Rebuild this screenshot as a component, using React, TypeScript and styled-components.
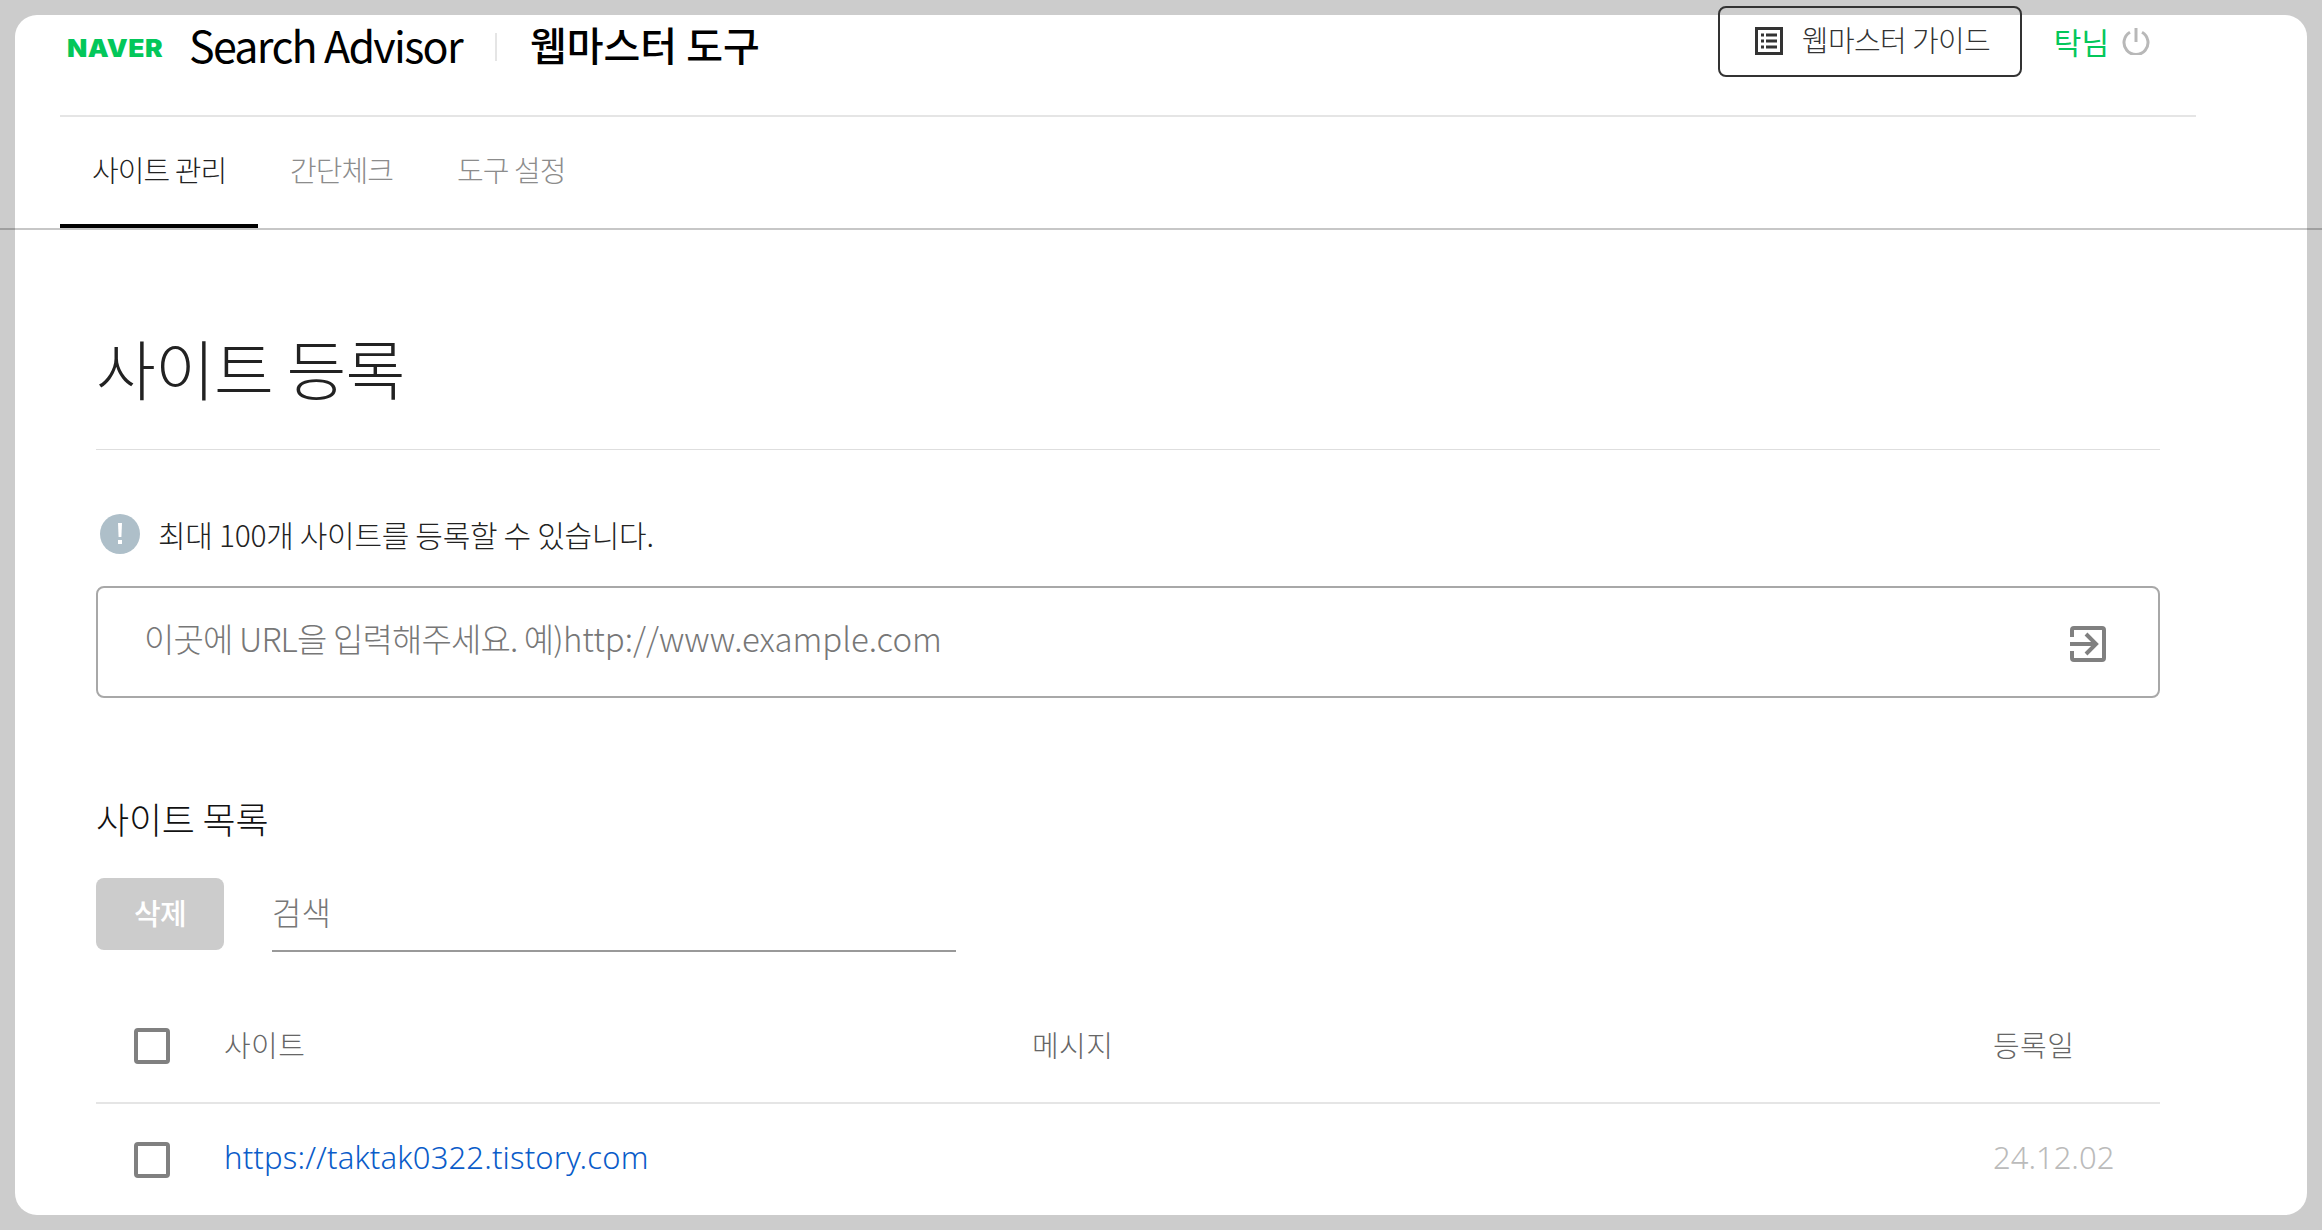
import React from "react";
import styled, { createGlobalStyle } from "styled-components";

const Global = createGlobalStyle`
  html, body { margin: 0; padding: 0; background: #cccccc; }
  body { font-family: "Noto Sans CJK KR", "Noto Sans", sans-serif; font-weight: 300; overflow: hidden; }
  * { box-sizing: border-box; }
`;
const KR = `"Noto Sans CJK KR", "Noto Sans", sans-serif`;

const Page = styled.div`
  position: relative;
  width: 2322px;
  height: 1230px;
  padding: 15px;
  background: #cccccc;
`;
const Card = styled.div`
  width: 2292px;
  height: 1200px;
  background: #fff;
  border-radius: 22px;
`;
const Rule = styled.div`
  position: absolute;
  left: 0;
  right: 0;
  top: 228px;
  height: 2px;
  background: rgba(0, 0, 0, 0.22);
`;
const Nav = styled.header`
  margin: 0 111px 0 45px;
`;
const TopBar = styled.div`
  display: flex;
  align-items: flex-start;
  height: 102px;
  border-bottom: 2px solid #e5e5e5;
`;
const Brand = styled.div`
  display: flex;
  align-items: center;
  height: 58px;
  margin-left: 7px;
  flex: 1;
`;
const Logo = styled.span`
  font-family: "Inter", sans-serif;
  font-weight: 900;
  font-size: 24px;
  line-height: 1;
  letter-spacing: 0.4px;
  color: #03c75a;
  width: 97px;
  margin-top: 10px;
  transform: scaleX(1.1);
  transform-origin: left center;
  white-space: nowrap;
`;
const Product = styled.span`
  font-family: ${KR};
  font-weight: 400;
  font-size: 43px;
  color: #000;
  margin-left: 25px;
  letter-spacing: -1.7px;
  white-space: nowrap;
`;
const Sep = styled.span`
  width: 2px;
  height: 28px;
  background: #e5e5e5;
  margin: 6px 33px 0 33px;
`;
const ToolName = styled.span`
  font-family: ${KR};
  font-weight: 500;
  font-size: 40px;
  color: #000;
  white-space: nowrap;
`;
const GuideButton = styled.a`
  display: flex;
  align-items: center;
  width: 304px;
  height: 71px;
  margin-top: -9px;
  padding: 0 0 6px 35px;
  border: 2px solid #333;
  border-radius: 8px;
  font-size: 29px;
  color: #333;
  gap: 19px;
  white-space: nowrap;
  letter-spacing: -0.6px;
`;
const GuideGlyph = styled.svg`
  margin-top: 4px;
  flex: none;
`;
const User = styled.div`
  display: flex;
  align-items: center;
  height: 52px;
  margin: 0 46px 0 32px;
  gap: 13px;
`;
const UserName = styled.span`
  font-size: 30px;
  font-weight: 400;
  color: #03c75a;
  white-space: nowrap;
`;
const Tabs = styled.nav`
  display: flex;
  height: 111px;
`;
const Tab = styled.a<{ $active?: boolean }>`
  display: flex;
  align-items: center;
  height: 111px;
  padding: 0 32px 3px;
  font-size: 29px;
  letter-spacing: -0.95px;
  white-space: nowrap;
  color: ${(p) => (p.$active ? "#222" : "#8c8c8c")};
  border-bottom: 4px solid ${(p) => (p.$active ? "#000" : "transparent")};
`;
const Main = styled.main`
  margin: 2px 147px 0 81px;
`;
const Title = styled.h1`
  display: flex;
  align-items: center;
  margin: 0;
  height: 220px;
  padding-top: 55px;
  font-size: 65px;
  font-weight: 300;
  color: #222;
  letter-spacing: -0.8px;
  border-bottom: 1px solid #dedede;
`;
const Notice = styled.div`
  display: flex;
  align-items: center;
  gap: 18px;
  height: 136px;
  padding: 32px 0 0 4px;
  font-size: 30px;
  font-weight: 300;
  color: #222;
  letter-spacing: -0.3px;
`;
const InputBox = styled.div`
  display: flex;
  align-items: center;
  justify-content: space-between;
  height: 112px;
  padding: 0 52px 0 46px;
  border: 2px solid #a8a8a8;
  border-radius: 8px;
`;
const Placeholder = styled.span`
  font-size: 33px;
  color: #777;
  letter-spacing: -0.85px;
  padding-bottom: 8px;
  white-space: nowrap;
`;
const PlaceholderUrl = styled.span`
  letter-spacing: 0;
`;
const EnterGlyph = styled.svg`
  margin-top: 3px;
  flex: none;
`;
const SectionTitle = styled.h2`
  margin: 0;
  display: flex;
  align-items: center;
  height: 180px;
  padding-top: 60px;
  font-size: 36px;
  font-weight: 300;
  color: #111;
  letter-spacing: -0.2px;
`;
const Toolbar = styled.div`
  display: flex;
  gap: 48px;
  height: 74px;
`;
const DeleteButton = styled.button`
  width: 128px;
  height: 72px;
  padding: 0 0 4px;
  border: 0;
  border-radius: 8px;
  background: #cccccc;
  color: #fff;
  font-family: ${KR};
  font-size: 29px;
  font-weight: 500;
  letter-spacing: -0.8px;
`;
const SearchField = styled.div`
  display: flex;
  align-items: center;
  width: 684px;
  height: 74px;
  padding-bottom: 6px;
  border-bottom: 2px solid #999;
  font-size: 32px;
  color: #777;
`;
const HeaderRow = styled.div`
  display: grid;
  grid-template-columns: 128px 808px 961px 1fr;
  align-items: center;
  height: 152px;
  padding-top: 38px;
  border-bottom: 2px solid #e5e5e5;
`;
const BodyRow = styled.div`
  display: grid;
  grid-template-columns: 128px 808px 961px 1fr;
  align-items: center;
  height: 112px;
`;
const CheckCell = styled.div`
  padding-left: 38px;
`;
const Check = styled.span`
  display: block;
  width: 36px;
  height: 36px;
  border: 4px solid #808080;
  border-radius: 4px;
`;
const HeadCell = styled.span`
  font-size: 29px;
  color: #666;
  letter-spacing: 0.4px;
  padding-bottom: 4px;
`;
const LinkCell = styled.a`
  font-family: "Noto Sans", sans-serif;
  font-size: 31px;
  color: #0a5cc9;
  white-space: nowrap;
  letter-spacing: 0.15px;
  padding-bottom: 7px;
`;
const DateCell = styled.span`
  font-family: "Noto Sans", sans-serif;
  font-size: 31px;
  font-weight: 300;
  color: #bbb;
  padding-bottom: 7px;
`;

const GuideIcon = () => (
  <GuideGlyph width="28" height="28" viewBox="0 0 28 28" fill="none">
    <rect x="1.5" y="1.5" width="25" height="25" stroke="#333" strokeWidth="3" />
    <path d="M6 8h3M6 14h3M6 20h3M11 8h11M11 14h11M11 20h11" stroke="#333" strokeWidth="3" />
  </GuideGlyph>
);
const PowerIcon = () => (
  <svg width="28" height="28" viewBox="0 0 28 28" fill="none">
    <path d="M14 1v14" stroke="#b8b8b8" strokeWidth="3" />
    <path d="M8 5.2A12 12 0 1 0 20 5.2" stroke="#b8b8b8" strokeWidth="3" />
  </svg>
);
const InfoIcon = () => (
  <svg width="40" height="40" viewBox="0 0 40 40">
    <circle cx="20" cy="20" r="20" fill="#aebfc9" />
    <path d="M18 9h4l-.6 14h-2.8z" fill="#fff" />
    <rect x="18" y="26" width="4" height="4" fill="#fff" />
  </svg>
);
const EnterIcon = () => (
  <EnterGlyph width="36" height="36" viewBox="0 0 36 36" fill="none" stroke="#808080" strokeWidth="4">
    <path d="M2 11V4a2 2 0 0 1 2-2h28a2 2 0 0 1 2 2v28a2 2 0 0 1-2 2H4a2 2 0 0 1-2-2v-7" />
    <path d="M0 18h26" />
    <path d="M16 8l10 10-10 10" />
  </EnterGlyph>
);

export default function App() {
  return (
    <>
      <Global />
      <Page>
        <Card>
          <Nav>
            <TopBar>
              <Brand>
                <Logo>NAVER</Logo>
                <Product>Search Advisor</Product>
                <Sep />
                <ToolName>웹마스터 도구</ToolName>
              </Brand>
              <GuideButton>
                <GuideIcon />
                웹마스터 가이드
              </GuideButton>
              <User>
                <UserName>탁님</UserName>
                <PowerIcon />
              </User>
            </TopBar>
            <Tabs>
              <Tab $active>사이트 관리</Tab>
              <Tab>간단체크</Tab>
              <Tab>도구 설정</Tab>
            </Tabs>
          </Nav>
          <Main>
            <Title>사이트 등록</Title>
            <Notice>
              <InfoIcon />
              최대 100개 사이트를 등록할 수 있습니다.
            </Notice>
            <InputBox>
              <Placeholder>
                이곳에 URL을 입력해주세요. 예)<PlaceholderUrl>http://www.example.com</PlaceholderUrl>
              </Placeholder>
              <EnterIcon />
            </InputBox>
            <SectionTitle>사이트 목록</SectionTitle>
            <Toolbar>
              <DeleteButton>삭제</DeleteButton>
              <SearchField>검색</SearchField>
            </Toolbar>
            <HeaderRow>
              <CheckCell><Check /></CheckCell>
              <HeadCell>사이트</HeadCell>
              <HeadCell>메시지</HeadCell>
              <HeadCell>등록일</HeadCell>
            </HeaderRow>
            <BodyRow>
              <CheckCell><Check /></CheckCell>
              <LinkCell>https://taktak0322.tistory.com</LinkCell>
              <span />
              <DateCell>24.12.02</DateCell>
            </BodyRow>
          </Main>
        </Card>
        <Rule />
      </Page>
    </>
  );
}
